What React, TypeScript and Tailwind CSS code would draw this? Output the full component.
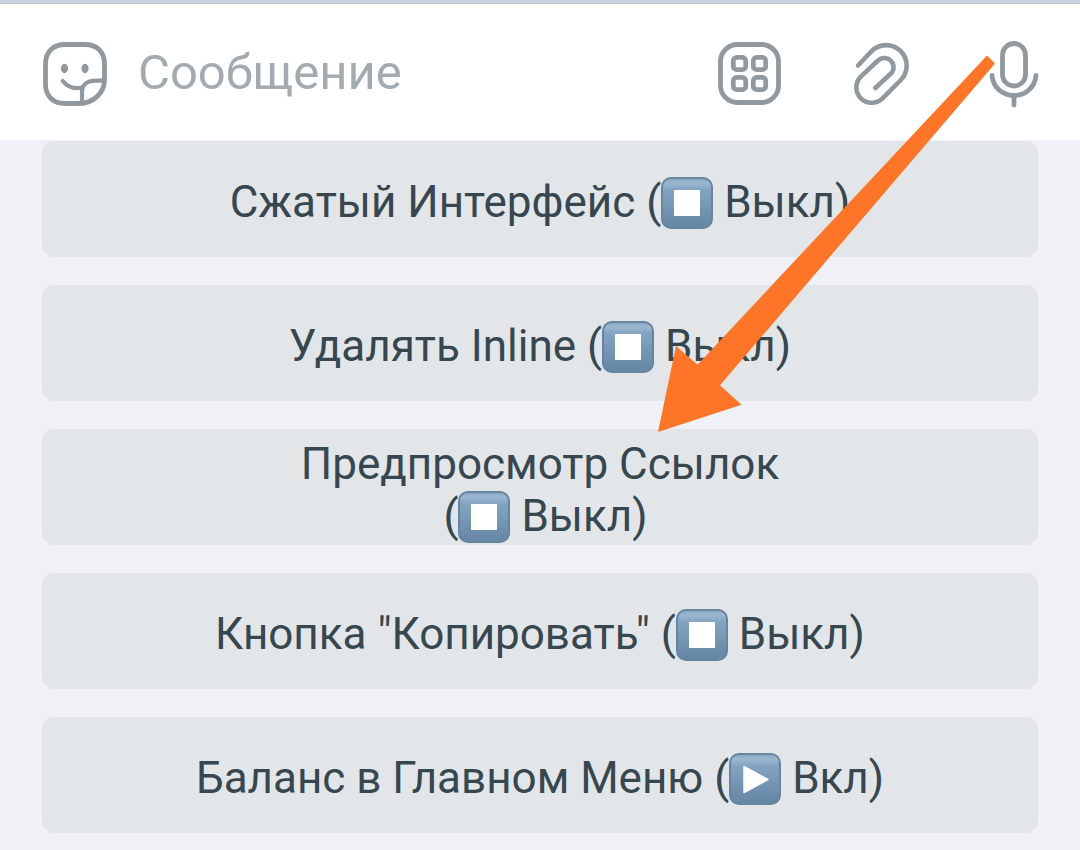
import type { ReactNode } from 'react';

type State = 'on' | 'off';

const options: { title: string; state: State; wrap?: boolean }[] = [
    { title: 'Сжатый Интерфейс', state: 'off' },
    { title: 'Удалять Inline', state: 'off' },
    { title: 'Предпросмотр Ссылок', state: 'off', wrap: true },
    { title: 'Кнопка "Копировать"', state: 'off' },
    { title: 'Баланс в Главном Меню', state: 'on' },
];

function StickerIcon() {
    return (
        <svg width="64" height="64" viewBox="0 0 64 64" fill="none" stroke="currentColor" strokeWidth="4.800" strokeLinecap="round" strokeLinejoin="round">
            <path d="M61.5 38V22C61.5 10 54 2.5 42 2.5H22C10 2.5 2.5 10 2.5 22v20c0 12 7.500 19.500 19.500 19.500h14C50 61.500 61.500 51 61.500 38Z" />
            <path d="M19.700 39C25 45.500 31 47.300 39 45.500" strokeWidth="4.200" />
            <path d="M60.500 38.700H53C45 38.700 39 42.500 39 50v10" strokeWidth="4.200" />
            <ellipse cx="21.500" cy="26.500" rx="3.600" ry="4.700" fill="currentColor" stroke="none" />
            <ellipse cx="42" cy="26.500" rx="3.600" ry="4.700" fill="currentColor" stroke="none" />
        </svg>
    );
}

function CommandsIcon() {
    return (
        <svg width="64" height="64" viewBox="0 0 64 64" fill="none" stroke="currentColor" strokeWidth="4.800">
            <rect x="2.500" y="2.500" width="58" height="58" rx="17" />
            <rect x="15.300" y="15.300" width="12.400" height="12.400" rx="3.500" />
            <rect x="35.300" y="15.300" width="12.400" height="12.400" rx="3.500" />
            <rect x="15.300" y="35.300" width="12.400" height="12.400" rx="3.500" />
            <rect x="35.300" y="35.300" width="12.400" height="12.400" rx="3.500" />
        </svg>
    );
}

function AttachIcon() {
    return (
        <svg width="56" height="64" viewBox="0 0 56 64" fill="none" stroke="currentColor" strokeWidth="4.600" strokeLinecap="round">
            <path d="M4 23.500 17.400 9.300A20.500 20.500 0 0 1 46.800 38L28.500 56.300A15.200 15.200 0 0 1 6.800 34.700L24 18.500A9.200 9.200 0 0 1 37.200 31.300L21.300 46" />
        </svg>
    );
}

function MicIcon() {
    return (
        <svg width="50" height="67" viewBox="0 0 50 67" fill="none" stroke="currentColor" strokeWidth="4.800" strokeLinecap="round">
            <rect x="13.500" y="2.500" width="23" height="42.500" rx="11.500" />
            <path d="M3 34.500C4 46 13 54.500 25 54.500S46 46 47 34.500M25 55v9" />
        </svg>
    );
}

function StateBadge({ state }: { state: State }) {
    return (
        <svg className="-my-3 inline-block align-baseline" width="52" height="52" viewBox="0 0 52 52" role="img" aria-label={state === 'on' ? 'play' : 'stop'}>
            <defs>
                <linearGradient id={`face-${state}`} x1="0" y1="0" x2="0" y2="1">
                    <stop offset="0" stopColor="#86a5c3" />
                    <stop offset="0.1" stopColor="#9cb7d0" />
                    <stop offset="0.24" stopColor="#83a3c2" />
                    <stop offset="1" stopColor="#6485a4" />
                </linearGradient>
            </defs>
            <rect x="1" y="1" width="50" height="50" rx="9" fill={`url(#face-${state})`} stroke="#67859f" strokeWidth="2" />
            {state === 'on' ? (
                <path d="M15 13.500v26L39 26.500Z" fill="#fff" stroke="#fff" strokeWidth="1.500" strokeLinejoin="round" />
            ) : (
                <rect x="13" y="13" width="26" height="26" fill="#fff" />
            )}
        </svg>
    );
}

function IconButton({ label, children }: { label: string; children: ReactNode }) {
    return (
        <button type="button" aria-label={label} className="flex h-17 w-16 shrink-0 items-center justify-center text-[#91999e]">
            {children}
        </button>
    );
}

export default function App() {
    return (
        <main className="relative min-h-screen overflow-hidden bg-[#f0f1f6] font-['Roboto',sans-serif]">
            <div className="h-1 border-b border-[#b9c3cf] bg-[#c9d2dc]" />
            <header className="flex h-34 items-center bg-white pt-1 pr-[34px] pl-[43px]">
                <IconButton label="Стикеры"><StickerIcon /></IconButton>
                <input
                    type="text"
                    aria-label="Сообщение"
                    placeholder="Сообщение"
                    className="mb-0.5 ml-[31px] h-16 min-w-0 flex-1 bg-transparent text-[49px] text-[#37474f] outline-none placeholder:text-[#a3abb1]"
                />
                <div className="flex gap-17">
                    <IconButton label="Команды"><CommandsIcon /></IconButton>
                    <IconButton label="Прикрепить"><AttachIcon /></IconButton>
                    <IconButton label="Голосовое сообщение"><MicIcon /></IconButton>
                </div>
            </header>
            <div className="flex flex-col gap-7 px-[42px] pt-px pb-4">
                {options.map(({ title, state, wrap }) => (
                    <button key={title} type="button" className="h-29 w-full rounded-xl bg-[#e2e6e9] pt-1.5 text-center text-[44px] leading-[52px] text-[#37474f]">
                        {title}
                        {wrap && <br />}
                        &nbsp;(<StateBadge state={state} /> {state === 'on' ? 'Вкл' : 'Выкл'})
                    </button>
                ))}
            </div>
            <svg className="pointer-events-none absolute top-[55px] left-[658px]" width="338" height="378" viewBox="0 0 338 378" fill="#ff7528" aria-hidden="true">
                <path d="M0 377 18 291 39.500 309.700 329 .500 337 8.500 62 330.300 83.500 349.700Z" />
            </svg>
        </main>
    );
}
